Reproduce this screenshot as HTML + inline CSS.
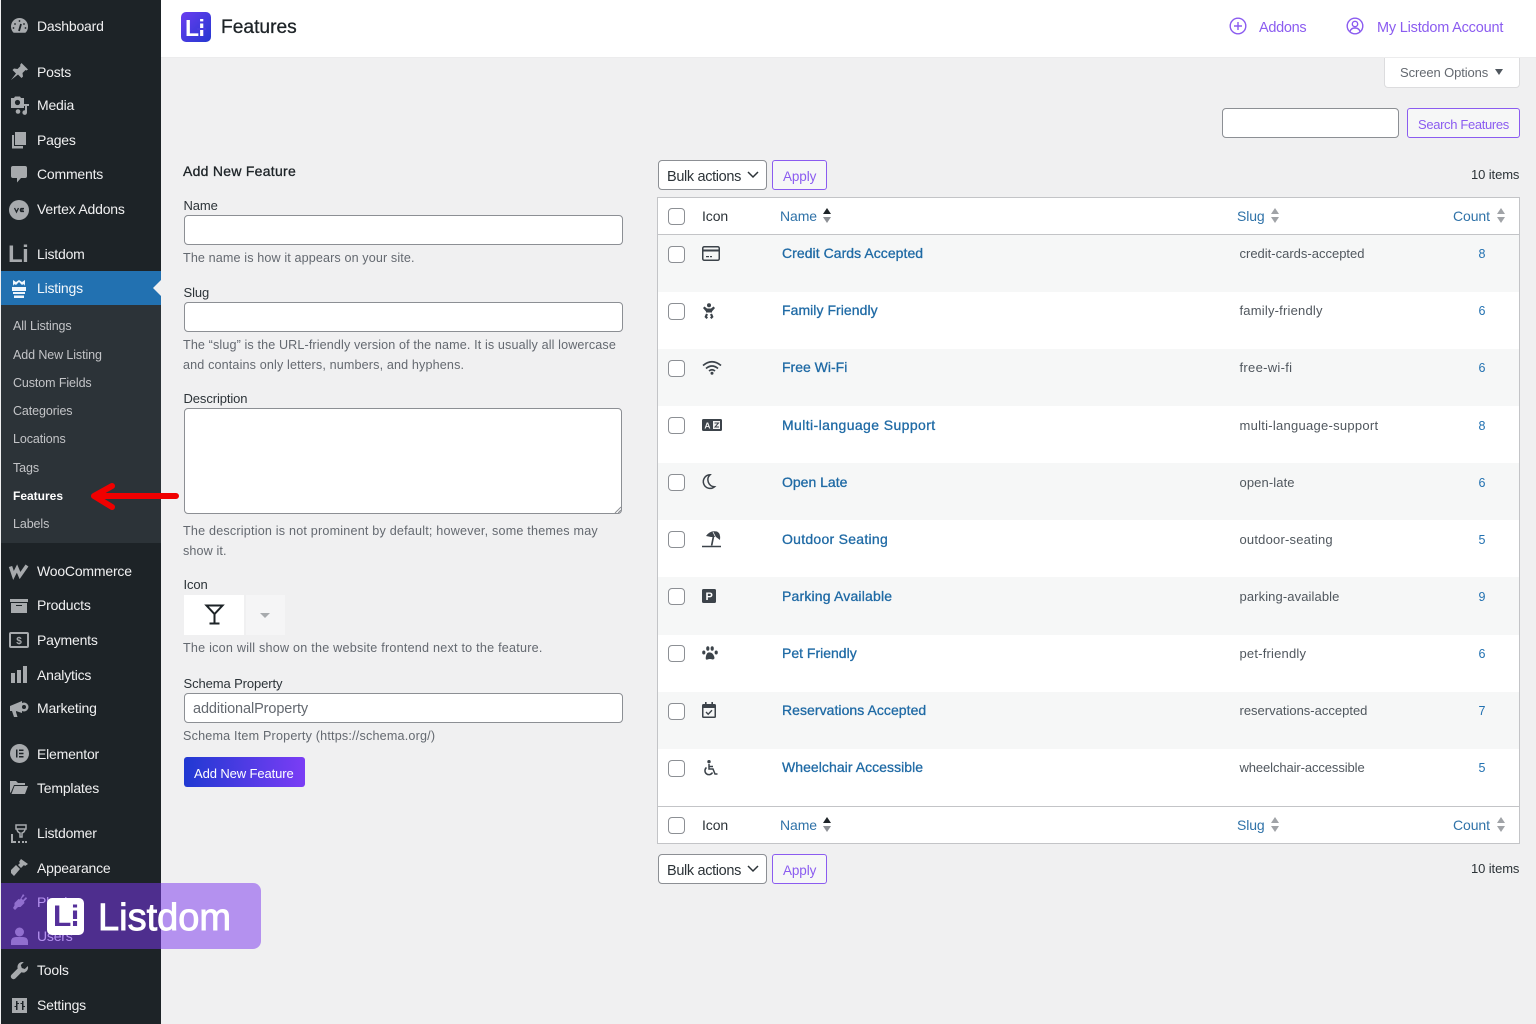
<!DOCTYPE html>
<html><head><meta charset="utf-8"><title>Features</title>
<style>
html,body{margin:0;padding:0}
body{width:1536px;height:1024px;position:relative;overflow:hidden;background:#f0f0f1;font-family:"Liberation Sans",sans-serif;color:#3c434a}
.t{position:absolute;white-space:nowrap;line-height:20px;height:20px}
.b{position:absolute;box-sizing:border-box}
svg{position:absolute;overflow:visible}
.m{left:37px;font-size:14px;color:#f0f0f1;letter-spacing:-.2px}
.s{left:13px;font-size:12.5px;color:#c3c4c7;letter-spacing:-.1px}
.l{left:183.5px;font-size:13px;color:#2c3338;letter-spacing:-.1px}
.h{left:183px;font-size:12.6px;color:#646970;letter-spacing:.12px}
.i{background:#fff;border:1px solid #8c8f94;border-radius:4px}
.c{left:668px;width:17px;height:17px;background:#fff;border:1px solid #8c8f94;border-radius:4px}
.r{left:658px;width:861px;height:57px}
.n{left:782px;font-size:14px;color:#1f6aa5;-webkit-text-stroke:.3px #1f6aa5;letter-spacing:.05px}
.g{left:1239.5px;font-size:13px;color:#50575e;letter-spacing:0}
.k{font-size:12.5px;color:#2271b1;width:12px;text-align:center;left:1476px}
.a{font-size:14px;color:#2f72a8;letter-spacing:-.1px}
.p{color:#8b5cf0}
.ic{fill:#a7aaad}
.d{fill:#3c434a}
</style></head><body>
<!-- sidebar -->
<div class="b" style="left:1px;top:0;width:160px;height:1024px;background:#1d2327"></div>
<div class="b" style="left:1px;top:271px;width:160px;height:34px;background:#2271b1"></div>
<div class="b" style="left:1px;top:305px;width:160px;height:238px;background:#2c3338"></div>
<div class="b" style="left:153px;top:280px;width:0;height:0;border-top:8px solid transparent;border-bottom:8px solid transparent;border-right:8px solid #f0f0f1"></div>

<svg style="left:10px;top:17px" width="19" height="18" viewBox="0 0 19 18"><path class="ic" d="M9.500 1a8.500 8.500 0 0 0-8.500 8.500c0 2.600 1 4.700 2.600 6.300h11.800A8.500 8.500 0 0 0 18 9.500 8.500 8.500 0 0 0 9.500 1z"/><path d="M9 14l2-7" stroke="#1d2327" stroke-width="1.800"/><circle cx="5" cy="7" r=".9" fill="#1d2327"/><circle cx="14" cy="7" r=".9" fill="#1d2327"/><circle cx="9.500" cy="4" r=".9" fill="#1d2327"/><circle cx="3.500" cy="11" r=".9" fill="#1d2327"/><circle cx="15.500" cy="11" r=".9" fill="#1d2327"/></svg>
<span class="t m" style="top:16px">Dashboard</span>

<svg style="left:10px;top:62px" width="19" height="19" viewBox="0 0 19 19"><path class="ic" d="M11.500 1l6.500 6.500-1.500 1-1-.5-3 3 .5 3.500-1.500 1.500-3.500-3.500L1 18l5-6.500L2.500 8 4 6.500l3.500.5 3-3-.5-1z"/></svg>
<span class="t m" style="top:62px">Posts</span>

<svg style="left:10px;top:96px" width="20" height="19" viewBox="0 0 20 19"><path class="ic" d="M1 2h3l1-1.500h5L11 2h3v10H1z"/><circle cx="7.500" cy="6.500" r="2.600" fill="#1d2327"/><path class="ic" d="M11 8h8v2h-2v6.500a2.300 2.300 0 1 1-2-2.200V10h-4z"/><circle cx="8" cy="15.500" r="2.300" class="ic"/></svg>
<span class="t m" style="top:95px">Media</span>

<svg style="left:11px;top:132px" width="16" height="17" viewBox="0 0 16 17"><path class="ic" d="M4 0h11v13H4z"/><path class="ic" d="M1 3h2v11h9v2.500H1z"/></svg>
<span class="t m" style="top:130px">Pages</span>

<svg style="left:11px;top:166px" width="16" height="17" viewBox="0 0 16 17"><path class="ic" d="M2 0h12a2 2 0 0 1 2 2v8a2 2 0 0 1-2 2h-4l-4 4.500V12H2a2 2 0 0 1-2-2V2a2 2 0 0 1 2-2z"/></svg>
<span class="t m" style="top:164px">Comments</span>

<svg style="left:9px;top:200px" width="20" height="20" viewBox="0 0 20 20"><circle class="ic" cx="10" cy="10" r="10"/><path d="M5.500 8l2 4 2-4M15 8.500h-3q-1.300 1.500 0 3h3M11.500 10h3" fill="none" stroke="#1d2327" stroke-width="1.300"/></svg>
<span class="t m" style="top:199px">Vertex Addons</span>

<span class="t" style="left:8px;top:245px;font-size:24px;font-weight:bold;color:#a7aaad;letter-spacing:-.5px">Li</span>
<span class="t m" style="top:244px">Listdom</span>

<svg style="left:12px;top:279px" width="14" height="20" viewBox="0 0 14 20"><path fill="#f0f6fc" d="M1 1l3 2 3-2 3 2 3-2v6q-1-3-3-1L7 3 4 6Q2 4 1 7z"/><path fill="#f0f6fc" d="M0 8h14v4H0zM1 13h12v2H1zM2 16.500h10V19H2z"/></svg>
<span class="t m" style="top:278px;color:#fff;opacity:.95">Listings</span>

<span class="t s" style="top:316px">All Listings</span>
<span class="t s" style="top:345px">Add New Listing</span>
<span class="t s" style="top:373px">Custom Fields</span>
<span class="t s" style="top:401px">Categories</span>
<span class="t s" style="top:429px">Locations</span>
<span class="t s" style="top:458px">Tags</span>
<span class="t s" style="top:486px;color:#fff;font-weight:bold;font-size:12px;letter-spacing:0">Features</span>
<span class="t s" style="top:514px">Labels</span>

<svg style="left:9px;top:565px" width="20" height="13" viewBox="0 0 20 13"><path fill="none" stroke="#a7aaad" stroke-width="3.500" d="M1.500 1.500l3 9 3.500-7 3 7 7-10"/></svg>
<span class="t m" style="top:561px">WooCommerce</span>

<svg style="left:10px;top:599px" width="18" height="14" viewBox="0 0 18 14"><path class="ic" d="M0 0h18v3H0zM1 4h16v10H1z"/><path d="M6 6h6v1H6z" fill="#1d2327"/></svg>
<span class="t m" style="top:595px">Products</span>

<svg style="left:9px;top:632px" width="20" height="16" viewBox="0 0 20 16"><rect x="1" y="1" width="18" height="14" rx="1" fill="none" stroke="#a7aaad" stroke-width="2"/><text x="10" y="12" font-size="10" font-weight="bold" text-anchor="middle" fill="#a7aaad" font-family="Liberation Sans">$</text></svg>
<span class="t m" style="top:630px">Payments</span>

<svg style="left:10px;top:665px" width="18" height="18" viewBox="0 0 18 18"><path class="ic" d="M1 8h4v10H1zM7 5h4v13H7zM13 1h4v17h-4z"/></svg>
<span class="t m" style="top:665px">Analytics</span>

<svg style="left:10px;top:699px" width="19" height="19" viewBox="0 0 19 19"><path class="ic" d="M0 7l12-5v12L6 12v1l1.500 5H4l-2-6H0z"/><circle cx="14" cy="8" r="4.500" class="ic"/><circle cx="14" cy="8" r="2" fill="#1d2327"/></svg>
<span class="t m" style="top:698px">Marketing</span>

<svg style="left:10px;top:744px" width="19" height="19" viewBox="0 0 19 19"><circle class="ic" cx="9.500" cy="9.500" r="9.500"/><path d="M6 5.500h1.500v8H6zM9 5.500h4.500V7H9zM9 8.700h4.500v1.600H9zM9 12h4.500v1.500H9z" fill="#1d2327"/></svg>
<span class="t m" style="top:744px">Elementor</span>

<svg style="left:10px;top:780px" width="18" height="15" viewBox="0 0 18 15"><path class="ic" d="M0 1h6l2 2h7v2H4L1 12l-1 1zM4.500 6H18l-3 8H1.500z"/></svg>
<span class="t m" style="top:778px">Templates</span>

<svg style="left:10px;top:824px" width="18" height="20" viewBox="0 0 18 20"><path fill="none" stroke="#a7aaad" stroke-width="1.500" d="M6 1h10v4h-10zM7 5q0 3 3 4v4h2V9q3-1 3-4"/><path class="ic" d="M1 10h2v7h3v2H1zM8 17h2v2H8zM12 17h2v2h-2zM15 17h2v2h-2z"/></svg>
<span class="t m" style="top:823px">Listdomer</span>

<svg style="left:10px;top:858px" width="19" height="19" viewBox="0 0 19 19"><path class="ic" d="M11 1l7 5-3 2-1-1-2 2-1 1-3-3 2-2-1-1zM6 7l4 4-6 7-3-3v-3z"/></svg>
<span class="t m" style="top:858px">Appearance</span>

<svg style="left:11px;top:893px" width="17" height="18" viewBox="0 0 17 18"><path class="ic" d="M12 1l1.500 1.500-3 3 1.500 1.500 3-3L16 5.500l-3 3 .5 1.500-4 4H7l-3 3-2-2 1.500-2.500V10l4-4 1.500.5z"/></svg>
<span class="t m" style="top:892px">Plugins</span>

<svg style="left:11px;top:927px" width="17" height="18" viewBox="0 0 17 18"><circle class="ic" cx="8.500" cy="5" r="4.500"/><path class="ic" d="M0 18v-3q0-5 5-5h7q5 0 5 5v3z"/></svg>
<span class="t m" style="top:926px">Users</span>

<svg style="left:11px;top:962px" width="17" height="17" viewBox="0 0 17 17"><path class="ic" d="M11.500 0a5 5 0 0 0-4.800 6.500L.5 12.700a2.700 2.700 0 0 0 3.800 3.800l6.200-6.200A5 5 0 0 0 16.800 4l-3 3-3-1-1-3 3-3z"/></svg>
<span class="t m" style="top:960px">Tools</span>

<svg style="left:12px;top:998px" width="15" height="15" viewBox="0 0 15 15"><path class="ic" d="M0 0h15v15H0z"/><path d="M4 3h1.500v2H7v1H5.500v6H4V9H2.500V8H4zM10 3h1.500v5H13v1h-1.500v3H10V6H8.500V5H10z" fill="#1d2327"/></svg>
<span class="t m" style="top:995px">Settings</span>

<!-- top bar -->
<div class="b" style="left:161px;top:0;width:1375px;height:58px;background:#fff;border-bottom:1px solid #ececed"></div>
<div class="b" style="left:181px;top:12px;width:30px;height:30px;border-radius:5px;background:linear-gradient(135deg,#6a3df0,#2438d0)"></div>
<span class="t" style="left:185px;top:18px;font-size:23px;font-weight:bold;color:#fff;letter-spacing:-.5px">Li</span>
<div class="b" style="left:197px;top:28px;width:9px;height:1.500px;background:#4a3ce0"></div>
<span class="t" style="left:221px;top:18px;font-size:19.200px;color:#1d2327;-webkit-text-stroke:.3px #1d2327">Features</span>
<svg style="left:1229px;top:17px" width="18" height="18" viewBox="0 0 18 18" fill="none" stroke="#8b5cf0" stroke-width="1.400"><circle cx="9" cy="9" r="7.800"/><path d="M9 5v8M5 9h8"/></svg>
<span class="t p" style="left:1259px;top:18px;font-size:14.500px;letter-spacing:-.3px">Addons</span>
<svg style="left:1346px;top:17px" width="18" height="18" viewBox="0 0 18 18" fill="none" stroke="#8b5cf0" stroke-width="1.400"><circle cx="9" cy="9" r="7.800"/><circle cx="9" cy="7" r="2.700"/><path d="M4 14.500q1-3.500 5-3.500t5 3.500"/></svg>
<span class="t p" style="left:1377px;top:18px;font-size:14.500px;letter-spacing:-.2px">My Listdom Account</span>

<!-- screen options -->
<div class="b" style="left:1384px;top:58px;width:136px;height:30px;background:#fff;border:1px solid #dcdcde;border-top:0;border-radius:0 0 4px 4px"></div>
<span class="t" style="left:1400px;top:63px;font-size:13px;color:#646970;letter-spacing:-.1px">Screen Options</span>
<div class="b" style="left:1495px;top:69px;border-left:4.500px solid transparent;border-right:4.500px solid transparent;border-top:6px solid #50575e"></div>

<!-- search -->
<div class="b i" style="left:1222px;top:108px;width:177px;height:30px"></div>
<div class="b" style="left:1407px;top:108px;width:113px;height:30px;border:1px solid #8b5cf0;border-radius:3px;background:#f6f7f7"></div>
<span class="t p" style="left:1418px;top:115px;font-size:13px;letter-spacing:-.35px">Search Features</span>

<!-- form -->
<span class="t" style="left:183px;top:161px;font-size:14px;color:#1d2327;-webkit-text-stroke:.3px #1d2327;letter-spacing:.27px">Add New Feature</span>
<span class="t l" style="top:196px">Name</span>
<div class="b i" style="left:184px;top:215px;width:439px;height:30px"></div>
<span class="t h" style="top:248px">The name is how it appears on your site.</span>
<span class="t l" style="top:283px">Slug</span>
<div class="b i" style="left:184px;top:302px;width:439px;height:30px"></div>
<span class="t h" style="top:335px">The “slug” is the URL-friendly version of the name. It is usually all lowercase</span>
<span class="t h" style="top:355px;letter-spacing:.14px">and contains only letters, numbers, and hyphens.</span>
<span class="t l" style="top:389px">Description</span>
<div class="b i" style="left:184px;top:408px;width:438px;height:106px"></div>
<svg style="left:614px;top:506px" width="8" height="8" stroke="#8c8f94" stroke-width="1"><path d="M7 1L1 7M7 4L4 7"/></svg>
<span class="t h" style="top:521px;letter-spacing:.2px">The description is not prominent by default; however, some themes may</span>
<span class="t h" style="top:541px">show it.</span>
<span class="t l" style="top:575px">Icon</span>
<div class="b" style="left:184px;top:595px;width:60px;height:40px;background:#fff"></div>
<div class="b" style="left:246px;top:595px;width:39px;height:40px;background:#f5f5f6"></div>
<svg style="left:205px;top:604px" width="19" height="21" viewBox="0 0 19 21" fill="none" stroke="#1d2327" stroke-width="2"><path d="M1.500 1.500h16L9.500 10zM9.500 10v9M4.500 19.500h10"/></svg>
<div class="b" style="left:260px;top:613px;border-left:5px solid transparent;border-right:5px solid transparent;border-top:5px solid #a7aaad"></div>
<span class="t h" style="top:638px;letter-spacing:.23px">The icon will show on the website frontend next to the feature.</span>
<span class="t l" style="top:674px">Schema Property</span>
<div class="b i" style="left:184px;top:693px;width:439px;height:30px"></div>
<span class="t" style="left:193px;top:699px;font-size:14.500px;color:#646970;letter-spacing:-.1px">additionalProperty</span>
<span class="t h" style="top:726px;letter-spacing:.19px">Schema Item Property (https://schema.org/)</span>
<div class="b" style="left:184px;top:757px;width:121px;height:30px;border-radius:3px;background:linear-gradient(90deg,#2039d2,#7b3df5)"></div>
<span class="t" style="left:194px;top:764px;font-size:13px;color:#fff;letter-spacing:-.1px">Add New Feature</span>

<!-- toolbar top -->
<div class="b i" style="left:658px;top:160px;width:109px;height:30px"></div>
<span class="t" style="left:667px;top:167px;font-size:14.500px;color:#2c3338;letter-spacing:-.35px">Bulk actions</span>
<svg style="left:747px;top:171px" width="12" height="8" fill="none" stroke="#2c3338" stroke-width="1.500"><path d="M1 1l5 5 5-5"/></svg>
<div class="b" style="left:772px;top:160px;width:55px;height:30px;border:1px solid #8b5cf0;border-radius:3px;background:#f6f7f7"></div>
<span class="t p" style="left:783px;top:167px;font-size:13.500px;letter-spacing:-.1px">Apply</span>
<span class="t" style="left:1471px;top:165px;font-size:13px;color:#2c3338;letter-spacing:-.1px">10 items</span>

<!-- table -->
<div class="b" style="left:657px;top:197px;width:863px;height:647px;background:#fff;border:1px solid #c3c4c7"></div>
<div class="b" style="left:658px;top:234px;width:861px;height:1px;background:#c3c4c7"></div>
<div class="b" style="left:658px;top:806px;width:861px;height:1px;background:#c3c4c7"></div>
<div class="b r" style="top:235px;background:#f6f7f7"></div>
<div class="b r" style="top:349px;background:#f6f7f7"></div>
<div class="b r" style="top:463px;background:#f6f7f7"></div>
<div class="b r" style="top:577px;background:#f6f7f7;height:58px"></div>
<div class="b r" style="top:692px;background:#f6f7f7"></div>

<!-- header -->
<div class="b c" style="top:208px"></div>
<span class="t" style="left:702px;top:206px;font-size:14px;color:#2c3338;letter-spacing:-.1px">Icon</span>
<span class="t a" style="left:780px;top:206px">Name</span>
<svg style="left:822px;top:208px" width="10" height="16"><path d="M1 6l4-6 4 6z" fill="#1d2327"/><path d="M1 9l4 6 4-6z" fill="#8c8f94"/></svg>
<span class="t a" style="left:1237px;top:206px">Slug</span>
<svg style="left:1270px;top:208px" width="10" height="16" fill="#a0a3a7"><path d="M1 6l4-6 4 6zM1 9l4 6 4-6z"/></svg>
<span class="t a" style="left:1453px;top:206px">Count</span>
<svg style="left:1496px;top:208px" width="10" height="16" fill="#a0a3a7"><path d="M1 6l4-6 4 6zM1 9l4 6 4-6z"/></svg>

<!-- rows -->
<div class="b c" style="top:246px"></div>
<svg style="left:702px;top:246px" width="18" height="15" viewBox="0 0 18 15"><rect x=".75" y=".75" width="16.500" height="13.500" rx="1.500" fill="none" stroke="#3c434a" stroke-width="1.500"/><path class="d" d="M1 3.500h16v2H1zM4 10h3v1.200H4zM8 10h2v1.200H8z"/></svg>
<span class="t n" style="top:243px">Credit Cards Accepted</span>
<span class="t g" style="top:244px">credit-cards-accepted</span>
<span class="t k" style="top:244px">8</span>

<div class="b c" style="top:303px"></div>
<svg style="left:703px;top:303px" width="12" height="16" viewBox="0 0 12 16"><circle class="d" cx="6" cy="2.200" r="2"/><path class="d" d="M0 5l1.500-1.500L4 5.500h4l2.500-2L12 5 9 8.500v1H3v-1zM3 10.500l2 1-1 2 1 1L3.500 16 1.500 14zM9 10.500l-2 1 1 2-1 1L8.500 16l2-2z"/></svg>
<span class="t n" style="top:300px">Family Friendly</span>
<span class="t g" style="top:301px;letter-spacing:.2px">family-friendly</span>
<span class="t k" style="top:301px">6</span>

<div class="b c" style="top:360px"></div>
<svg style="left:702px;top:360px" width="20" height="15" viewBox="0 0 20 15" fill="none" stroke="#3c434a" stroke-width="1.700"><path d="M1 5.500q9-7.500 18 0M4 8.500q6-5 12 0M7 11q3-2.500 6 0"/><circle class="d" stroke="none" cx="10" cy="13.200" r="1.500"/></svg>
<span class="t n" style="top:357px;letter-spacing:0">Free Wi-Fi</span>
<span class="t g" style="top:358px;letter-spacing:.3px">free-wi-fi</span>
<span class="t k" style="top:358px">6</span>

<div class="b c" style="top:417px"></div>
<svg style="left:702px;top:419px" width="20" height="12" viewBox="0 0 20 12"><rect class="d" width="20" height="12" rx="1.500"/><text x="5.500" y="9.500" font-size="8.500" font-weight="bold" text-anchor="middle" fill="#f2f2f2" font-family="Liberation Sans">A</text><rect x="11" y="2" width="7" height="8" fill="#f2f2f2"/><path d="M12.500 4h4l-3.500 4h4" fill="none" stroke="#3c434a"/></svg>
<span class="t n" style="top:415px;letter-spacing:.4px">Multi-language Support</span>
<span class="t g" style="top:416px;letter-spacing:.27px">multi-language-support</span>
<span class="t k" style="top:416px">8</span>

<div class="b c" style="top:474px"></div>
<svg style="left:702px;top:474px" width="13" height="15" viewBox="0 0 13 15" fill="none" stroke="#3c434a" stroke-width="1.500"><path d="M8 .8a6.800 6.800 0 1 0 4.500 12 7 7 0 0 1-4.500-12z"/></svg>
<span class="t n" style="top:472px;letter-spacing:0">Open Late</span>
<span class="t g" style="top:473px;letter-spacing:.1px">open-late</span>
<span class="t k" style="top:473px">6</span>

<div class="b c" style="top:531px"></div>
<svg style="left:702px;top:531px" width="19" height="17" viewBox="0 0 19 17"><path class="d" d="M4 5Q8-1 15 .5 19 2.500 18 9l-4-3-5 0zM10.500 6h1.700L10.500 14.500H8.800zM0 14.800h19v1.500H0z"/><path d="M11 1l2.500 5" stroke="#fff" stroke-width=".8"/></svg>
<span class="t n" style="top:529px;letter-spacing:.27px">Outdoor Seating</span>
<span class="t g" style="top:530px;letter-spacing:.2px">outdoor-seating</span>
<span class="t k" style="top:530px">5</span>

<div class="b c" style="top:588px"></div>
<div class="b" style="left:702px;top:589px;width:14px;height:14px;background:#3c434a;border-radius:1.500px"></div>
<span class="t" style="left:705.500px;top:587px;font-size:11px;font-weight:bold;color:#fff">P</span>
<span class="t n" style="top:586px;letter-spacing:.18px">Parking Available</span>
<span class="t g" style="top:587px;letter-spacing:.1px">parking-available</span>
<span class="t k" style="top:587px">9</span>

<div class="b c" style="top:645px"></div>
<svg style="left:702px;top:646px" width="16" height="14" viewBox="0 0 16 14"><path class="d" d="M8 6.500q2.500 0 4 3.500t-1.500 3.500q-2.500-1-5 0T4 10t4-3.500z"/><ellipse class="d" cx="5.800" cy="2.500" rx="1.600" ry="2.300"/><ellipse class="d" cx="10.200" cy="2.500" rx="1.600" ry="2.300"/><ellipse class="d" cx="1.800" cy="6.500" rx="1.600" ry="2"/><ellipse class="d" cx="14.200" cy="6.500" rx="1.600" ry="2"/></svg>
<span class="t n" style="top:643px;letter-spacing:0">Pet Friendly</span>
<span class="t g" style="top:644px;letter-spacing:.2px">pet-friendly</span>
<span class="t k" style="top:644px">6</span>

<div class="b c" style="top:703px"></div>
<svg style="left:702px;top:702px" width="14" height="16" viewBox="0 0 14 16"><path class="d" d="M3 0h1.600v2h4.800V0H11v2h1.500A1.500 1.500 0 0 1 14 3.500v11a1.500 1.500 0 0 1-1.500 1.500h-11A1.500 1.500 0 0 1 0 14.500v-11A1.500 1.500 0 0 1 1.500 2H3z"/><path d="M1.500 6h11v8.500h-11z" fill="#f6f7f7"/><path d="M4 10l2.200 2.200L10 8.300" fill="none" stroke="#3c434a" stroke-width="1.400"/></svg>
<span class="t n" style="top:700px">Reservations Accepted</span>
<span class="t g" style="top:701px">reservations-accepted</span>
<span class="t k" style="top:701px">7</span>

<div class="b c" style="top:760px"></div>
<svg style="left:702px;top:760px" width="16" height="16" viewBox="0 0 16 16" fill="none" stroke="#3c434a" stroke-width="1.500"><circle class="d" stroke="none" cx="7" cy="1.700" r="1.700"/><path d="M7 4v5h4l2 5h2.500M7 6.500h4"/><path d="M4.500 7.500a4 4 0 1 0 6 5"/></svg>
<span class="t n" style="top:757px">Wheelchair Accessible</span>
<span class="t g" style="top:758px;letter-spacing:-.1px">wheelchair-accessible</span>
<span class="t k" style="top:758px">5</span>

<!-- footer -->
<div class="b c" style="top:817px"></div>
<span class="t" style="left:702px;top:815px;font-size:14px;color:#2c3338;letter-spacing:-.1px">Icon</span>
<span class="t a" style="left:780px;top:815px">Name</span>
<svg style="left:822px;top:817px" width="10" height="16"><path d="M1 6l4-6 4 6z" fill="#1d2327"/><path d="M1 9l4 6 4-6z" fill="#8c8f94"/></svg>
<span class="t a" style="left:1237px;top:815px">Slug</span>
<svg style="left:1270px;top:817px" width="10" height="16" fill="#a0a3a7"><path d="M1 6l4-6 4 6zM1 9l4 6 4-6z"/></svg>
<span class="t a" style="left:1453px;top:815px">Count</span>
<svg style="left:1496px;top:817px" width="10" height="16" fill="#a0a3a7"><path d="M1 6l4-6 4 6zM1 9l4 6 4-6z"/></svg>

<!-- toolbar bottom -->
<div class="b i" style="left:658px;top:854px;width:109px;height:30px"></div>
<span class="t" style="left:667px;top:861px;font-size:14.500px;color:#2c3338;letter-spacing:-.35px">Bulk actions</span>
<svg style="left:747px;top:865px" width="12" height="8" fill="none" stroke="#2c3338" stroke-width="1.500"><path d="M1 1l5 5 5-5"/></svg>
<div class="b" style="left:772px;top:854px;width:55px;height:30px;border:1px solid #8b5cf0;border-radius:3px;background:#f6f7f7"></div>
<span class="t p" style="left:783px;top:861px;font-size:13.500px;letter-spacing:-.1px">Apply</span>
<span class="t" style="left:1471px;top:859px;font-size:13px;color:#2c3338;letter-spacing:-.1px">10 items</span>

<!-- arrow -->
<svg style="left:88px;top:482px" width="92" height="30" viewBox="0 0 92 30" fill="none" stroke="#f00000" stroke-width="6" stroke-linecap="round" stroke-linejoin="round"><path d="M88 14H8M24 4L6 14l18 11"/></svg>

<!-- watermark -->
<div class="b" style="left:1px;top:883px;width:260px;height:66px;border-radius:0 8px 8px 0;background:rgba(124,58,237,.52)"></div>
<div class="b" style="left:47px;top:898px;width:37px;height:37px;border-radius:5px;background:#fff"></div>
<span class="t" style="left:53px;top:907px;font-size:30px;font-weight:bold;color:#55309a;letter-spacing:-.5px">Li</span>
<div class="b" style="left:70px;top:919px;width:10px;height:1.500px;background:#fff"></div>
<span class="t" style="left:98px;top:908px;font-size:38px;color:#fff;-webkit-text-stroke:.9px #fff">Listdom</span>
</body></html>
